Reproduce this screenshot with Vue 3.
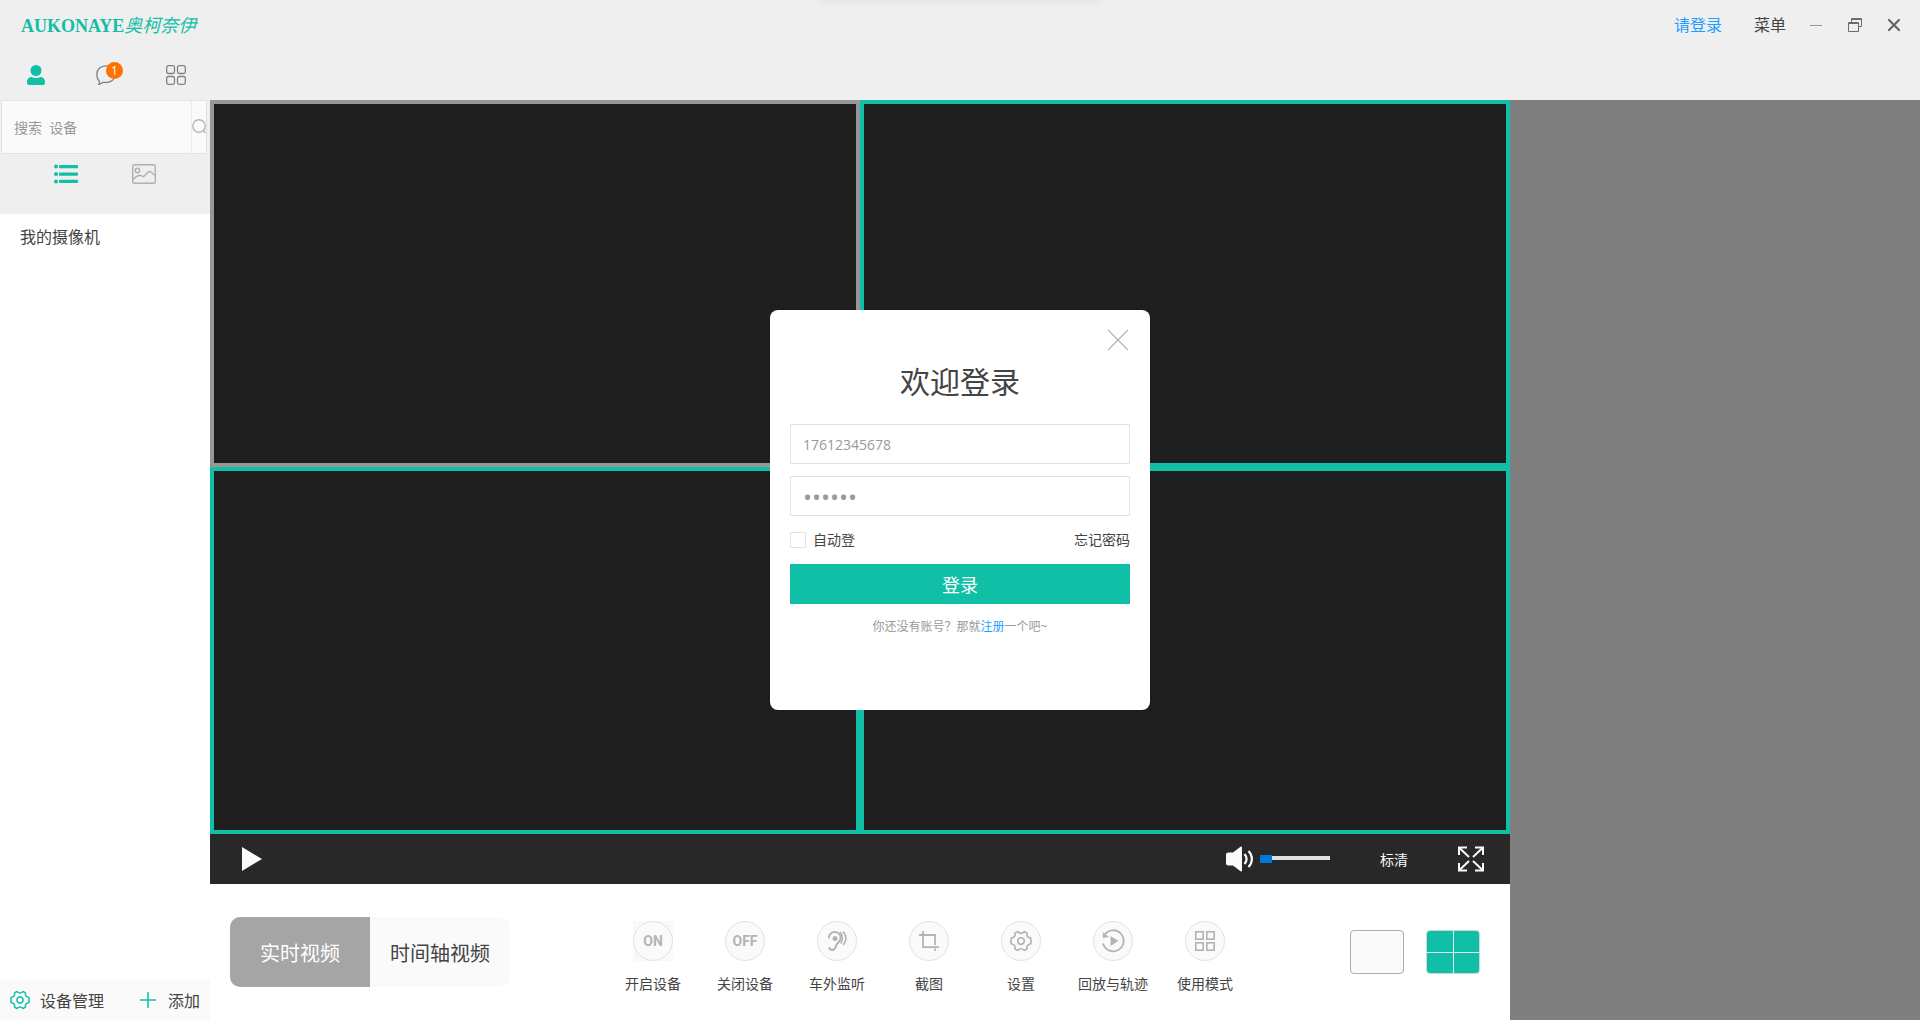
<script setup>
import { ref } from 'vue'

const phone = ref('17612345678')
const password = ref('123456')
const autoLogin = ref(false)
const keyword = ref('')
const volume = ref(0)
const cells = ref([
  { id: 1, selected: true },
  { id: 2, selected: false },
  { id: 3, selected: false },
  { id: 4, selected: false }
])
const actions = [
  { id: 'on', label: '开启设备' },
  { id: 'off', label: '关闭设备' },
  { id: 'listen', label: '车外监听' },
  { id: 'crop', label: '截图' },
  { id: 'settings', label: '设置' },
  { id: 'replay', label: '回放与轨迹' },
  { id: 'mode', label: '使用模式' }
]
const gear =
  'M7 1.500Q8.500 3 10 3T13 1.500L15.500 2.800Q15 5 16 6T19 7.500V12.500Q17 13 16 14T15.500 17.200L13 18.500Q11.500 17 10 17T7 18.500L4.500 17.200Q5 15 4 14T1 12.500V7.500Q3 7 4 6T4.500 2.800Z'
</script>

<template>
  <div class="app">
    <header class="header">
      <div class="titlebar">
        <h1 class="brand">AUKONAYE<i>奥柯奈伊</i></h1>
        <nav class="window-nav">
          <a class="signin" href="#">请登录</a>
          <button class="menu">菜单</button>
          <button class="win" aria-label="最小化">
            <svg width="16" height="16"><path d="M2 8.500h12" stroke="#999" /></svg>
          </button>
          <button class="win" aria-label="还原">
            <svg width="16" height="16" fill="none" stroke="#6b6b6b">
              <path d="M1.500 5.500h10v9h-10zM1.500 6.500h10" />
              <path d="M4.500 5V1.500h10v8H12M4.500 2.500h10" />
            </svg>
          </button>
          <button class="win" aria-label="关闭">
            <svg width="16" height="16"><path d="M3 3l10 10M13 3L3 13" stroke="#666" stroke-width="2.200" stroke-linecap="round" /></svg>
          </button>
        </nav>
      </div>
      <div class="tools">
        <button class="tool" aria-label="用户">
          <svg width="20" height="20" fill="#11bfa6">
            <circle cx="10" cy="5.500" r="5.500" />
            <path d="M1 17c0-4 3-5 4.500-5 1.500.8 3 1 4.500 1s3-.2 4.500-1c1.500 0 4.500 1 4.500 5v.8c0 1.500-.8 2.200-2.200 2.200H3.200C1.800 20 1 19.300 1 17.800z" />
          </svg>
        </button>
        <button class="tool" aria-label="消息">
          <svg width="20" height="20" fill="none" stroke="#7f8189" stroke-width="1.300">
            <path d="M10 .8h1c5 0 8.200 3.600 8.200 8 0 5-3.400 8.700-9 8.700-1.600 0-2.500-.1-3.500 0-1 .9-2 1.500-3.900 1.800.8-1 .9-2 .5-3C1.500 14.500.8 12 .8 9.500.8 4.500 4.500.8 10 .8z" />
          </svg>
          <span class="badge">1</span>
        </button>
        <button class="tool" aria-label="应用">
          <svg width="20" height="20" fill="none" stroke="#7f8189" stroke-width="1.300">
            <rect x=".7" y=".7" width="7.800" height="7.800" rx="1.800" /><rect x="11.500" y=".7" width="7.800" height="7.800" rx="1.800" />
            <rect x=".7" y="11.500" width="7.800" height="7.800" rx="1.800" /><rect x="11.500" y="11.500" width="7.800" height="7.800" rx="1.800" />
          </svg>
        </button>
      </div>
    </header>

    <div class="body">
      <aside class="sidebar">
        <div class="side-head">
          <form class="search" @submit.prevent>
            <input v-model="keyword" type="text" aria-label="搜索设备" placeholder="搜索&#32;&#32;设备" />
            <button aria-label="搜索">
              <svg width="14" height="16" fill="none" stroke="#b8b8b8" stroke-width="1.400">
                <circle cx="7" cy="7" r="6.200" /><path d="M11.300 11.500l2.700 2.800" />
              </svg>
            </button>
          </form>
          <div class="views">
            <button aria-label="列表">
              <svg width="24" height="20" fill="#11bfa6">
                <circle cx="2" cy="2.500" r="2" /><circle cx="2" cy="10" r="2" /><circle cx="2" cy="17.500" r="2" />
                <rect x="5" y="1" width="19" height="3.300" rx="1" /><rect x="5" y="8.400" width="19" height="3.300" rx="1" /><rect x="5" y="15.800" width="19" height="3.300" rx="1" />
              </svg>
            </button>
            <button aria-label="缩略图">
              <svg width="24" height="20" fill="none" stroke="#b0b0b0" stroke-width="1.400">
                <rect x=".7" y=".7" width="22.600" height="18.600" rx="1.800" />
                <circle cx="5.500" cy="6.500" r="2.200" />
                <path d="M1 15.500c2-2 4-3.800 6.500-4.200 1.800-.2 2.500 1.500 4 1.200 2-.5 3.500-5 6.200-5 2.300 0 2.500 3.300 5.300 3.500" />
              </svg>
            </button>
          </div>
        </div>
        <h2 class="group">我的摄像机</h2>
        <div class="side-foot">
          <button>
            <svg width="20" height="20" fill="none" stroke="#11bfa6" stroke-width="1.500" stroke-linejoin="round">
              <path :d="gear" /><circle cx="10" cy="10" r="3" />
            </svg>
            <span>设备管理</span>
          </button>
          <button class="add">
            <svg width="16" height="16"><path d="M8 0v16M0 8h16" stroke="#11bfa6" stroke-width="1.500" /></svg>
            <span>添加</span>
          </button>
        </div>
      </aside>

      <main class="stage">
        <section class="grid">
          <div v-for="cell in cells" :key="cell.id" class="cell" :class="{ selected: cell.selected }"></div>
        </section>

        <section class="player">
          <button aria-label="播放">
            <svg width="20" height="26" fill="#fafafa"><path d="M0 1l20 12L0 25z" /></svg>
          </button>
          <div class="player-right">
            <button class="sound" aria-label="音量">
              <svg width="28" height="26" fill="#fafafa">
                <path d="M2.500 6.500h4.500L14.500.8c.8-.5 1.500-.2 1.500.7v23c0 .9-.7 1.200-1.500.7L7 19.500H2.500C1 19.500 0 18.700 0 17.500v-9c0-1.200 1-2 2.500-2z" />
                <path d="M18.500 8c2.500 3 2.500 7 0 10M22.500 5c4.500 4.500 4.500 11.500 0 16" fill="none" stroke="#fafafa" stroke-width="2.200" />
              </svg>
            </button>
            <input v-model="volume" class="volume" type="range" min="0" max="100" aria-label="音量" />
            <button class="quality">标清</button>
            <button class="full" aria-label="全屏">
              <svg width="26" height="26" fill="none" stroke="#fafafa" stroke-width="2">
                <path d="M1 9V1.500h8M17 1.500h8V9M25 17v7.500h-8M9 24.500H1V17" />
                <path d="M1.500 2l9.500 9M24.500 2L15 11M24.500 24L15 15M1.500 24l9.500-9" />
              </svg>
            </button>
          </div>
        </section>

        <section class="controls">
          <div class="tabs">
            <button class="active">实时视频</button>
            <button>时间轴视频</button>
          </div>
          <div class="actions">
            <button v-for="item in actions" :key="item.id">
              <span class="round" :class="{ boxed: item.id === 'on' }">
                <span class="disc">
                  <template v-if="item.id === 'on'">ON</template>
                  <template v-else-if="item.id === 'off'">OFF</template>
                  <svg v-else-if="item.id === 'listen'" width="20" height="20" fill="none" stroke="#b3b3b3" stroke-width="2" stroke-linecap="round">
                    <path d="M2 6.500C2 3.500 4.500 1 7.700 1c3.500 0 6 2.500 6 5.800 0 4-3.500 4.700-4.500 7.700-.7 2.300-1.500 4.500-4 4.500-1.500 0-2.500-.8-3-2" />
                    <path d="M13.500 1.500c2.300 3 2.300 7.500.5 10.500M16.500 1c3.200 4 3.200 8.500 0 12.500" stroke-width="1.600" />
                    <circle cx="8" cy="7.500" r="2.500" fill="#b3b3b3" stroke="none" />
                  </svg>
                  <svg v-else-if="item.id === 'crop'" width="20" height="20" fill="none" stroke="#b3b3b3" stroke-width="1.800">
                    <path d="M4 0v16.200h16M0 4h16v10M16 17.500V20" />
                  </svg>
                  <svg v-else-if="item.id === 'settings'" width="22" height="22" viewBox="0 0 20 20" fill="none" stroke="#b3b3b3" stroke-width="1.500" stroke-linejoin="round">
                    <path :d="gear" /><circle cx="10" cy="10" r="3" />
                  </svg>
                  <svg v-else-if="item.id === 'replay'" width="24" height="24" fill="none" stroke="#b3b3b3" stroke-width="1.800">
                    <path d="M3.500 5.800A10.500 10.500 0 1 1 2 14.500" />
                    <path d="M1.800 3v6l6-1z" fill="#b3b3b3" stroke="none" />
                    <path d="M9.500 7v10l8-5z" fill="#b3b3b3" stroke="none" />
                  </svg>
                  <svg v-else width="20" height="20" fill="none" stroke="#b3b3b3" stroke-width="1.600">
                    <rect x=".8" y=".8" width="7.400" height="7.400" /><rect x="11.800" y=".8" width="7.400" height="7.400" />
                    <rect x=".8" y="11.800" width="7.400" height="7.400" /><rect x="11.800" y="11.800" width="7.400" height="7.400" />
                  </svg>
                </span>
              </span>
              {{ item.label }}
            </button>
          </div>
          <div class="layouts">
            <button class="single" aria-label="单画面"></button>
            <button class="quad" aria-label="四画面"><i></i><i></i><i></i><i></i></button>
          </div>
        </section>
      </main>
      <aside class="blank"></aside>
    </div>

    <div class="overlay">
      <form class="dialog" role="dialog" aria-labelledby="login-title" @submit.prevent>
        <button class="close" type="button" aria-label="关闭">
          <svg width="20" height="20"><path d="M0 0l20 20M20 0L0 20" stroke="#aaa" stroke-width="1.200" /></svg>
        </button>
        <h2 id="login-title">欢迎登录</h2>
        <input v-model="phone" class="field" type="text" aria-label="手机号" />
        <input v-model="password" class="field secret" type="password" aria-label="密码" />
        <div class="options">
          <label><input v-model="autoLogin" type="checkbox" />自动登</label>
          <a href="#">忘记密码</a>
        </div>
        <button class="submit">登录</button>
        <p>你还没有账号？那就<a href="#">注册</a>一个吧~</p>
      </form>
    </div>
  </div>
</template>

<style>
body {
  margin: 0;
}
</style>

<style scoped>
.app {
  display: flex;
  flex-direction: column;
  min-height: 100vh;
  color: #444;
  background: #fff;
  font: 16px/24px "Open Sans", "Noto Sans CJK SC", sans-serif;
}
.app * {
  box-sizing: border-box;
}
button {
  padding: 0;
  border: 0;
  background: none;
  color: inherit;
  font: inherit;
}
input {
  font: inherit;
  border-radius: 0;
  outline: none;
}
a {
  color: inherit;
  text-decoration: none;
}
svg {
  display: block;
  flex: none;
}
.header {
  position: relative;
  height: 100px;
  background: #efefef;
  overflow: hidden;
}
.header::before {
  content: "";
  position: absolute;
  top: -12px;
  left: 50%;
  width: 280px;
  height: 10px;
  margin-left: -140px;
  box-shadow: 0 0 12px rgba(0, 0, 0, 0.1);
}
.titlebar {
  display: flex;
  justify-content: space-between;
  align-items: center;
  height: 50px;
  padding: 0 18px 0 21px;
}
.brand {
  margin: 0;
  padding-top: 2px;
  color: #11bfa6;
  font: bold 18px/24px "Liberation Serif", "Noto Sans CJK SC", serif;
}
.brand i {
  font-weight: normal;
}
.window-nav {
  display: flex;
  align-items: center;
}
.signin {
  color: #1e9fff;
}
.menu {
  margin: 0 22px 0 32px;
}
.win + .win {
  margin-left: 23px;
}
.tools {
  display: flex;
  gap: 50px;
  padding: 15px 26px;
}
.tool {
  position: relative;
}
.badge {
  position: absolute;
  top: -3px;
  left: 10px;
  width: 17px;
  height: 17px;
  border-radius: 50%;
  background: #ff7200;
  color: #fff;
  font-size: 12px;
  line-height: 17px;
}
.body {
  flex: 1;
  display: flex;
}
.sidebar {
  display: flex;
  flex-direction: column;
  flex: 0 0 210px;
}
.side-head {
  height: 114px;
  padding-left: 1px;
  background: #efefef;
}
.search {
  display: flex;
  width: 206px;
  height: 54px;
  border: 1px solid #e2e2e2;
  background: #fafafa;
}
.search input {
  flex: 1;
  min-width: 0;
  padding: 2px 12px 0;
  border: 0;
  border-right: 1px solid #ececec;
  background: none;
  font-size: 14px;
}
.search input::placeholder {
  color: #999;
}
.views {
  display: flex;
  gap: 54px;
  padding: 10px 53px;
}
.group {
  flex: 1;
  margin: 0;
  padding: 11px 20px;
  font-size: 16px;
  font-weight: normal;
}
.side-foot {
  display: flex;
  justify-content: space-between;
  height: 40px;
  padding: 0 10px;
  background: #fafafa;
}
.side-foot button {
  display: flex;
  align-items: center;
  gap: 10px;
}
.side-foot span {
  padding-top: 2px;
}
.side-foot .add {
  gap: 12px;
}
.stage {
  display: flex;
  flex-direction: column;
  flex: 1;
}
.grid {
  flex: 1;
  display: grid;
  grid-template: 1fr 1fr / 1fr 1fr;
}
.cell {
  border: 4px solid #11bfa6;
  background: #1e1e1e;
}
.cell.selected {
  border-color: #979797;
}
.player {
  display: flex;
  align-items: center;
  justify-content: space-between;
  height: 50px;
  padding: 0 26px 0 32px;
  background: #282828;
  color: #fafafa;
}
.player-right {
  display: flex;
  align-items: center;
}
.volume {
  appearance: none;
  width: 70px;
  height: 8px;
  margin: 0 50px 0 6px;
  background: none;
}
.volume::-webkit-slider-runnable-track {
  height: 8px;
  background: linear-gradient(#dfe2e4, #dfe2e4) 0 1px / 100% 4px no-repeat;
}
.volume::-webkit-slider-thumb {
  appearance: none;
  width: 12px;
  height: 8px;
  background: #0078d7;
}
.quality {
  padding-top: 2px;
  margin-right: 50px;
  font-size: 14px;
}
.controls {
  display: flex;
  align-items: center;
  justify-content: space-between;
  height: 136px;
  padding: 0 30px 0 20px;
}
.tabs {
  display: flex;
  border-radius: 10px;
  overflow: hidden;
}
.tabs button {
  width: 140px;
  height: 70px;
  padding-top: 3px;
  background: #fafafa;
  font-size: 20px;
}
.tabs .active {
  background: #a5a5a5;
  color: #fff;
}
.actions {
  display: flex;
  padding: 13px 2px 0 0;
}
.actions button {
  width: 92px;
  font-size: 14px;
}
.round {
  display: block;
  width: 40px;
  height: 40px;
  margin: 0 auto 11px;
}
.boxed {
  background: #f9f9f9;
}
.disc {
  display: flex;
  align-items: center;
  justify-content: center;
  height: 100%;
  border: 1px solid #e2e2e2;
  border-radius: 50%;
  background: #fafafa;
  color: #b3b3b3;
  font: bold 14px/20px Roboto, sans-serif;
}
.layouts {
  display: flex;
  gap: 22px;
}
.layouts button {
  width: 54px;
  height: 44px;
  border: 1px solid #adadad;
  border-radius: 4px;
  background: #fafafa;
}
.layouts .quad {
  display: grid;
  grid-template: 1fr 1fr / 1fr 1fr;
  gap: 1px;
  border-color: #d5d5d5;
  background: #e6f5f2;
  overflow: hidden;
}
.quad i {
  background: #11bfa6;
}
.blank {
  flex: 0 0 410px;
  background: #7f7f7f;
}
.overlay {
  position: fixed;
  inset: 0;
  display: grid;
  place-items: center;
}
.dialog {
  display: flex;
  flex-direction: column;
  width: 380px;
  height: 400px;
  padding: 20px;
  border-radius: 8px;
  background: #fff;
}
.close {
  align-self: flex-end;
  margin-right: 2px;
}
.dialog h2 {
  margin: 12px 0 22px;
  font-size: 30px;
  line-height: 40px;
  font-weight: normal;
  text-align: center;
}
.field {
  height: 40px;
  margin-bottom: 12px;
  padding: 0 12px;
  border: 1px solid #e2e2e2;
  color: #999;
  font-size: 14px;
}
.secret {
  font-size: 24px;
}
.options {
  display: flex;
  align-items: center;
  justify-content: space-between;
  height: 24px;
  margin-bottom: 12px;
  font-size: 14px;
}
.options label {
  display: flex;
  align-items: center;
  gap: 7px;
}
.options input {
  appearance: none;
  width: 16px;
  height: 16px;
  margin: 0;
  border: 1px solid #e2e2e2;
}
.submit {
  height: 40px;
  padding-top: 2px;
  background: #11bfa6;
  color: #fff;
  font-size: 18px;
}
.dialog p {
  margin: 11px 0;
  color: #999;
  font-size: 12px;
  text-align: center;
}
.dialog p a {
  color: #1e9fff;
}
</style>
